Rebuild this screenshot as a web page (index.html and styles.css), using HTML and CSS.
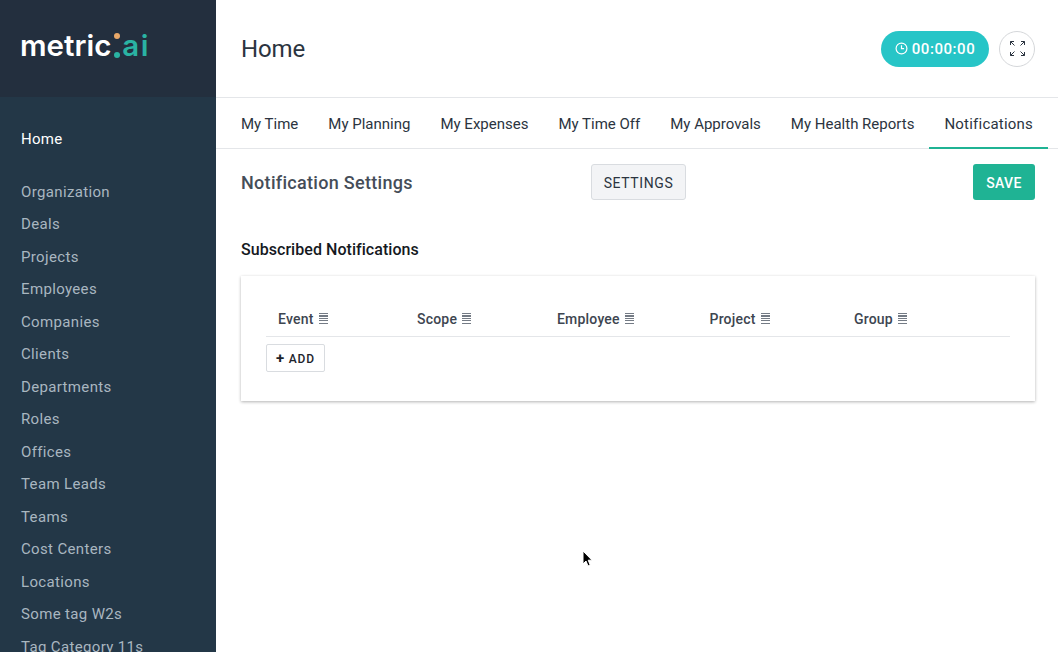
FILE: index.html
```html
<!DOCTYPE html>
<html lang="en">
<head>
<meta charset="utf-8">
<title>Home</title>
<link rel="stylesheet" href="styles.css">
</head>
<body>
<div class="app">
  <aside class="sidebar">
    <div class="brand">
      <span class="logo">metric<span class="logo-colon"><i class="dot dot-orange"></i><i class="dot dot-teal"></i></span><span class="logo-ai">ai</span></span>
    </div>
    <nav class="side-nav">
      <a class="side-home">Home</a>
      <ul class="side-list">
        <li>Organization</li>
        <li>Deals</li>
        <li>Projects</li>
        <li>Employees</li>
        <li>Companies</li>
        <li>Clients</li>
        <li>Departments</li>
        <li>Roles</li>
        <li>Offices</li>
        <li>Team Leads</li>
        <li>Teams</li>
        <li>Cost Centers</li>
        <li>Locations</li>
        <li>Some tag W2s</li>
        <li>Tag Category 11s</li>
      </ul>
    </nav>
  </aside>
  <main class="main">
    <header class="topbar">
      <h1 class="title">Home</h1>
      <div class="top-actions">
        <button class="timer">
          <svg class="timer-icon" viewBox="0 0 12 12" width="13" height="13"><circle cx="6" cy="6" r="5" fill="none" stroke="currentColor" stroke-width="1.1"/><path d="M6 3v3.2h2.4" fill="none" stroke="currentColor" stroke-width="1.1"/></svg>
          00:00:00
        </button>
        <button class="expand">
          <svg viewBox="0 0 17 17" width="17" height="17" fill="none" stroke="#2b3440" stroke-width="1"><path d="M1.500 5V1.500H5M1.500 1.500l4 4M12 1.500h3.500V5M15.500 1.500l-4 4M1.500 12v3.500H5M1.500 15.500l4-4M12 15.500h3.500V12M15.500 15.500l-4-4"/></svg>
        </button>
      </div>
    </header>
    <nav class="tabs">
      <a class="tab">My Time</a>
      <a class="tab">My Planning</a>
      <a class="tab">My Expenses</a>
      <a class="tab">My Time Off</a>
      <a class="tab">My Approvals</a>
      <a class="tab">My Health Reports</a>
      <a class="tab tab-active">Notifications</a>
    </nav>
    <section class="settings-bar">
      <h2 class="settings-title">Notification Settings</h2>
      <button class="btn-settings">SETTINGS</button>
      <button class="btn-save">SAVE</button>
    </section>
    <h3 class="sub-title">Subscribed Notifications</h3>
    <section class="card">
      <div class="table-head">
        <div class="col col-event">Event <span class="lines"></span></div>
        <div class="col col-scope">Scope <span class="lines"></span></div>
        <div class="col col-employee">Employee <span class="lines"></span></div>
        <div class="col col-project">Project <span class="lines"></span></div>
        <div class="col col-group">Group <span class="lines"></span></div>
      </div>
      <button class="btn-add"><span class="plus">+</span> ADD</button>
    </section>
  </main>
</div>
<svg class="cursor" viewBox="0 0 12 18" width="12" height="18"><path d="M1 1v13l3-3 2 5 2.200-1-2-4.800H10z" fill="#000" stroke="#fff" stroke-width="1"/></svg>
</body>
</html>
```
FILE: styles.css
```css
* { box-sizing: border-box; }
html, body { margin: 0; height: 100%; overflow: hidden; }
body { font-family: Roboto, "Noto Sans", sans-serif; background: #fff; color: #2b3440; }
.app { display: flex; height: 652px; overflow: hidden; }
.sidebar { width: 216px; flex: none; background: #233747; color: #fff; overflow: hidden; }
.brand { height: 97px; background: #232f3e; padding: 26px 0 0 20px; }
.logo { display: flex; align-items: baseline; font-family: Inter, sans-serif; font-weight: 600; font-size: 29.5px; line-height: 38px; letter-spacing: 0; color: #fff; }
.logo-colon { display: inline-flex; flex-direction: column; gap: 13px; margin: 0 2px 0 3px; align-self: center; }
.dot { display: block; width: 6px; height: 6px; border-radius: 50%; }
.dot-orange { background: #e8a869; }
.dot-teal { background: #2ab3a3; }
.logo-ai { color: #2ab3a3; letter-spacing: 1.5px; }
.side-nav { padding-top: 30px; }
.side-home { display: block; padding-left: 21px; font-size: 15px; line-height: 24px; letter-spacing: .3px; color: #fff; }
.side-list { list-style: none; margin: 28.5px 0 0; padding: 0 0 0 21px; color: #a9b6c0; font-size: 15px; letter-spacing: .35px; }
.side-list li { height: 32.5px; line-height: 24px; white-space: nowrap; }
.main { flex: 1; min-width: 0; }
.topbar { height: 98px; border-bottom: 1px solid #e4e6e9; display: flex; align-items: center; justify-content: space-between; padding: 0 23px 0 25px; }
.title { margin: 0; font-size: 24px; font-weight: 400; letter-spacing: -.1px; color: #2b3440; }
.top-actions { display: flex; align-items: center; gap: 10px; }
.timer { height: 36px; width: 108px; border: 0; border-radius: 18px; background: #27c5c7; color: #fff; font: 500 15px Roboto, sans-serif; letter-spacing: .55px; display: flex; align-items: center; justify-content: center; gap: 4px; padding: 0; }
.expand { width: 36px; height: 36px; border: 1px solid #d5d7da; border-radius: 50%; background: #fff; display: flex; align-items: center; justify-content: center; padding: 0; }
.tabs { height: 51px; border-bottom: 1px solid #e4e6e9; display: flex; padding: 0 0 0 10px; }
.tab { padding: 1px 15px 0; line-height: 50px; font-size: 15px; color: #2b3440; white-space: nowrap; height: 51px; }
.tab-active { letter-spacing: .22px; border-bottom: 2px solid #1fb394; }
.settings-bar { display: flex; align-items: center; height: 36px; margin: 15px 23px 0 25px; }
.settings-title { margin: 0; width: 350px; font-size: 18px; font-weight: 500; letter-spacing: .3px; color: #454d58; }
.btn-settings { width: 95px; height: 36px; padding: 1px 0 0; border: 1px solid #d9dce0; border-radius: 3px; background: #f3f4f6; color: #2b3440; font: 400 14px Roboto, sans-serif; letter-spacing: .6px; }
.btn-save { margin-left: auto; width: 62px; height: 36px; padding: 1px 0 0; border: 0; border-radius: 3px; background: #1fb394; color: #fff; font: 500 14px Roboto, sans-serif; letter-spacing: .4px; }
.sub-title { margin: 39px 0 0 25px; font-size: 16px; line-height: 22px; font-weight: 500; letter-spacing: .05px; color: #15191e; }
.card { margin: 15px 23px 0 25px; height: 125px; background: #fff; box-shadow: 0 1px 3px rgba(0,0,0,.3); padding: 25px 25px 0; }
.table-head { display: flex; height: 36px; border-bottom: 1px solid #e4e6e9; font-size: 14px; font-weight: 500; letter-spacing: .2px; color: #3d4550; line-height: 36px; }
.col { padding-left: 12px; white-space: nowrap; display: flex; align-items: center; gap: 5px; }
.col-event { width: 139px; }
.col-scope { width: 140px; }
.col-employee { width: 152.5px; }
.col-project { width: 144.5px; }
.lines { display: inline-block; width: 9px; height: 11px; background: repeating-linear-gradient(#747b85 0 1px, #fff 1px 2.5px); }
.btn-add { display: block; margin-top: 7px; width: 59px; height: 28px; padding: 0; border: 1px solid #d9dce0; border-radius: 2px; background: #fff; color: #1d242c; font: 500 12px Roboto, sans-serif; letter-spacing: .8px; }
.plus { font-size: 15px; line-height: 1; font-weight: 700; }
.cursor { position: absolute; left: 582px; top: 550px; }
```
